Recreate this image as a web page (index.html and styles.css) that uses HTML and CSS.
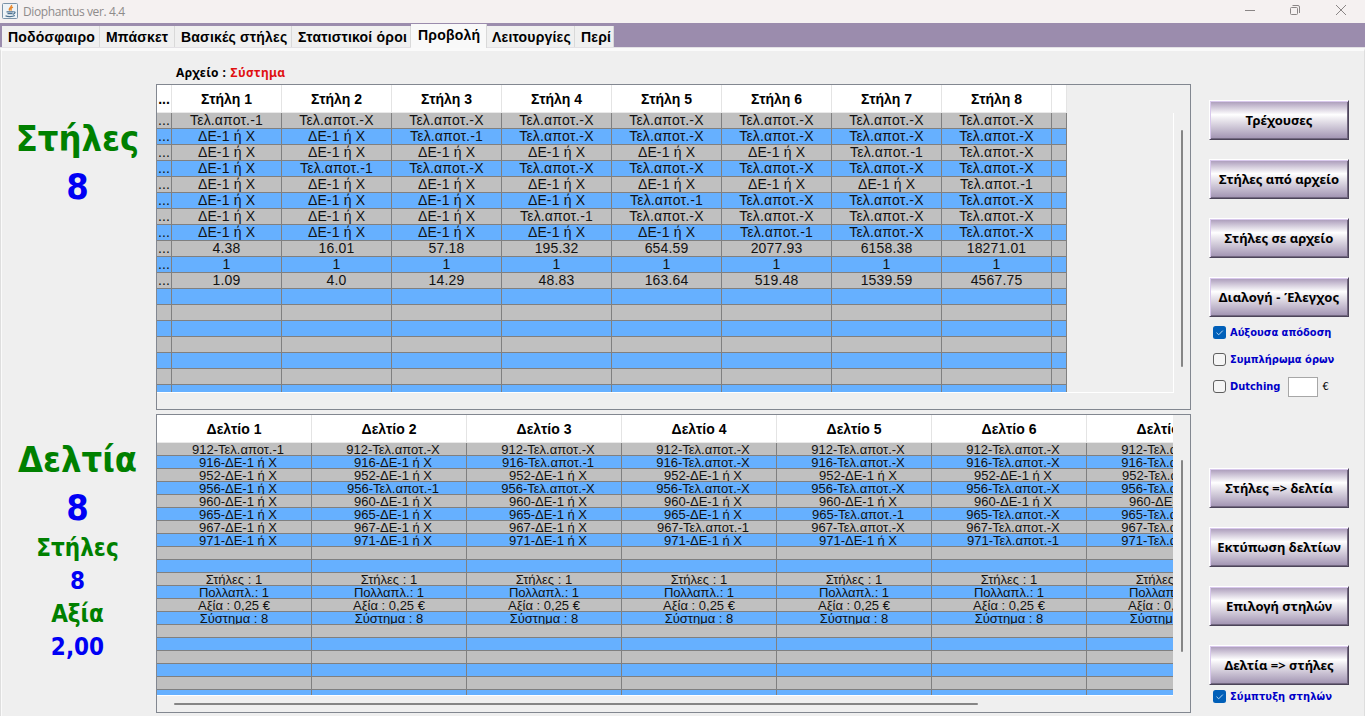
FILE: index.html
```html
<!DOCTYPE html>
<html lang="el">
<head>
<meta charset="utf-8">
<title>Diophantus ver. 4.4</title>
<link rel="stylesheet" href="styles.css">
</head>
<body>
<header class="titlebar">
  <svg class="app-icon" width="16" height="16" viewBox="0 0 16 16">
    <rect x=".5" y=".5" width="15" height="15" rx="1" fill="#eef3f7" stroke="#7b93a8"/>
    <path d="M9.500 2C10.300 4.200 6 4.700 7.600 7.700M11 4.200C8.600 5 8.600 6 9.400 7.600" fill="none" stroke="#e8862a" stroke-width="1.400"/>
    <path d="M4.500 8.800h6.500M5.500 10.700h5M11.200 8.800c2.800-.5 2.200 2.100-.4 2.500M3.500 12.800c2 1.300 7 1.200 9.300-.2" fill="none" stroke="#4d7291" stroke-width="1.200"/>
  </svg>
  <span class="app-title">Diophantus ver. 4.4</span>
  <svg class="win-controls" width="104" height="12" viewBox="0 0 104 12" fill="none" stroke="#8a8686">
    <path d="M1 6.500h10"/>
    <rect x="46.500" y="3.500" width="7" height="7" rx="1"/>
    <path d="M48.500 1.500h5.500q1.500 0 1.500 1.500v6"/>
    <path d="M92 1l10 10M102 1L92 11"/>
  </svg>
</header>
<nav class="tabs">
  <span class="tab t1">Ποδόσφαιρο</span><span class="tab t2">Μπάσκετ</span><span class="tab t3">Βασικές στήλες</span><span class="tab t4">Στατιστικοί όροι</span><span class="tab t5 active">Προβολή</span><span class="tab t6">Λειτουργίες</span><span class="tab t7">Περί</span>
</nav>
<main class="page">
  <aside class="totals">
    <div class="big green s1">Στήλες</div>
    <div class="big blue s2">8</div>
    <div class="big green s3">Δελτία</div>
    <div class="big blue s4">8</div>
    <div class="mid green s5">Στήλες</div>
    <div class="mid blue s6">8</div>
    <div class="mid green s7">Αξία</div>
    <div class="mid blue s8">2,00</div>
  </aside>
  <section class="center">
    <div class="file-line"><span>Αρχείο :</span> <span class="file-name">Σύστημα</span></div>
    <div class="panel panel-columns">
      <div class="viewport">
        <div class="grid grid-columns" id="columns"></div>
      </div>
      <div class="vbar"><div class="vthumb"></div></div>
    </div>
    <div class="panel panel-slips">
      <div class="viewport">
        <div class="grid grid-slips" id="slips"></div>
      </div>
      <div class="vbar"><div class="vthumb"></div></div>
      <div class="hthumb"></div>
    </div>
  </section>
  <aside class="actions">
    <div class="buttons upper">
      <button class="btn"><span class="b1">Τρέχουσες</span></button>
      <button class="btn"><span class="b2">Στήλες από αρχείο</span></button>
      <button class="btn"><span class="b3">Στήλες σε αρχείο</span></button>
      <button class="btn"><span class="b4">Διαλογή - Έλεγχος</span></button>
    </div>
    <div class="checks">
      <div class="check"><svg class="box" width="13" height="13" viewBox="0 0 13 13"><rect width="13" height="13" rx="2.500" fill="#005fb8"/><path d="M3.500 6.700l2.200 2.100L9.800 4.600" fill="none" stroke="#b9d8f2"/></svg><span class="label c1">Αύξουσα απόδοση</span></div>
      <div class="check"><span class="box empty"></span><span class="label c2">Συμπλήρωμα όρων</span></div>
      <div class="check"><span class="box empty"></span><span class="label c3">Dutching</span><span class="amount"></span><span class="euro">€</span></div>
    </div>
    <div class="buttons lower">
      <button class="btn"><span class="b5">Στήλες =&gt; δελτία</span></button>
      <button class="btn"><span class="b6">Εκτύπωση δελτίων</span></button>
      <button class="btn"><span class="b7">Επιλογή στηλών</span></button>
      <button class="btn"><span class="b8">Δελτία =&gt; στήλες</span></button>
    </div>
    <div class="check last"><svg class="box" width="13" height="13" viewBox="0 0 13 13"><rect width="13" height="13" rx="2.500" fill="#005fb8"/><path d="M3.500 6.700l2.200 2.100L9.800 4.600" fill="none" stroke="#b9d8f2"/></svg><span class="label c4">Σύμπτυξη στηλών</span></div>
  </aside>
</main>
<script src="app.js"></script>
</body>
</html>
```
FILE: styles.css
```css
* { box-sizing: border-box; }
body { margin: 0; width: 1365px; height: 716px; overflow: hidden; background: #efefef; font-family: "Liberation Sans", Arial, sans-serif; color: #000; }

.titlebar { height: 23px; background: #f5f1f1; display: flex; align-items: center; padding-left: 2px; }
.app-icon { margin-top: -1px; }
.app-title { margin-left: 5px; font: 12px/20px "Open Sans", sans-serif; color: #8e8b8b; letter-spacing: -0.38px; }
.win-controls { margin-left: auto; margin-right: 17px; margin-top: -3px; }

.tabs { height: 25px; background: #9b8cad; display: flex; align-items: flex-end; padding-left: 2px; border-bottom: 1px solid #e3e1e5; }
.tab { height: 21px; padding-left: 6px; background: #f0f0f0; border-right: 1px solid #d9d9d9; font-weight: bold; font-size: 14px; line-height: 22px; letter-spacing: 0.2px; white-space: nowrap; }
.tab.active { height: 24px; margin-bottom: -1px; padding-left: 7px; background: #f9f9f9; line-height: 23px; }
.t1 { width: 98px; } .t2 { width: 75px; } .t3 { width: 117px; } .t4 { width: 119px; } .t5 { width: 76px; } .t6 { width: 88px; padding-left: 5px; } .t7 { width: 39px; }

.page { height: 668px; display: flex; border-top: 3px solid #fafafa; border-left: 1px solid #dedede; border-right: 1px solid #dedede; box-shadow: inset 1px 0 #fafafa; }

.totals { width: 155px; padding-top: 64px; text-align: center; font-family: "DejaVu Sans Condensed", "DejaVu Sans", sans-serif; font-stretch: condensed; font-weight: bold; white-space: nowrap; }
.totals div { padding-right: 2px; }
.green { color: #008000; } .blue { color: #0000f4; }
.big { font-size: 36px; height: 48px; line-height: 48px; }
.mid { font-size: 24px; height: 33px; line-height: 33px; }
.s3 { margin-top: 225px; }

.center { width: 1035px; }
.file-line { height: 33px; padding: 14px 0 0 20px; font: bold 12px/16px "Noto Sans", sans-serif; letter-spacing: 0.35px; white-space: pre; }
.file-name { color: #e01010; margin-left: 1px; }
.panel { display: grid; grid-template-columns: 1017px 16px; border: 1px solid #828790; }
.panel-columns { height: 326px; grid-template-rows: 308px; }
.panel-slips { height: 299px; margin-top: 4px; grid-template-rows: 281px 16px; }
.viewport { overflow: hidden; border-bottom: 1px solid #fff; }
.panel-columns .viewport { background: linear-gradient(#fff, #fff) right 0 top 28px / 1px 300px no-repeat; }
.panel-slips .viewport { margin-right: 1px; }
.grid { display: grid; }
.grid-columns { width: 910px; grid-template-columns: 15px repeat(8, 110px) 15px; grid-template-rows: 28px; grid-auto-rows: 16px; }
.grid-slips { width: 1085px; grid-template-columns: repeat(7, 155px); grid-template-rows: 28px; grid-auto-rows: 13px; }
.head { background: #fff; border-right: 1px solid #e4e4e4; border-bottom: 1px solid #e9e9e9; font-weight: bold; font-size: 14px; line-height: 28px; text-align: center; white-space: nowrap; overflow: hidden; }
.cell { border-right: 1px solid #808080; border-bottom: 1px solid #808080; text-align: center; white-space: nowrap; overflow: hidden; color: #111; }
.gray { background: #c0c0c0; } .azure { background: #66b0ff; }
.grid-columns .cell { font-size: 14px; line-height: 15px; letter-spacing: 0.15px; }
.grid-slips .cell { font-size: 13px; line-height: 13px; }
.grid-slips .match { padding-left: 8px; }
.vbar { padding-left: 7px; }
.vthumb { width: 2px; border-radius: 1px; background: #858585; }
.panel-columns .vthumb { margin-top: 45px; height: 237px; }
.panel-slips .vthumb { margin-top: 45px; height: 192px; }
.hthumb { width: 804px; height: 2px; margin: 7px 0 0 17px; background: #858585; border-radius: 1px; }

.actions { padding: 49px 0 0 18px; }
.buttons { display: flex; flex-direction: column; gap: 19px; }
.btn { width: 140px; height: 40px; padding: 0; border: 1px solid; border-color: #fff #4c4459 #4c4459 #fff; box-shadow: inset 1px 1px #d8c8ec, inset -1px -1px #71677f; background: linear-gradient(#a898b8, #fff 36%, #ece9ef 48%, #a092b1); font: bold 13px/36px "Noto Sans", sans-serif; color: #000; white-space: nowrap; }
.b4 { letter-spacing: 0.15px; }
.checks { height: 151px; padding-top: 9px; display: flex; flex-direction: column; gap: 14px; }
.check { height: 13px; display: flex; align-items: center; margin-left: 4px; font: bold 11px/13px "DejaVu Sans Condensed", "DejaVu Sans", sans-serif; font-stretch: condensed; color: #0000c8; white-space: nowrap; }
.label { padding-bottom: 1px; }
.c4 { letter-spacing: 0.1px; }
.box { flex: none; width: 13px; height: 13px; margin-right: 4px; }
.empty { border: 1px solid #5f5f5f; border-radius: 3px; background: #f5f5f5; }
.amount { width: 30px; height: 20px; margin: 1px 4px 0 8px; background: #fff; border: 1px solid #a7a7a7; }
.euro { color: #000; font-weight: normal; }
.last { margin-top: 5px; }
```
FILE: app.js
```js
function fill(id, heads, rows) {
  const grid = document.getElementById(id);
  const add = (cls, text) => {
    const el = document.createElement('div');
    el.className = cls;
    const span = document.createElement('span');
    span.textContent = text;
    el.appendChild(span);
    grid.appendChild(el);
  };
  heads.forEach(h => add('head', h));
  rows.forEach((row, i) => heads.forEach((_, c) =>
    add('cell ' + (i % 2 ? 'azure' : 'gray') + (i < 8 ? ' match' : ''), row[c] || '')));
}

const D = 'ΔΕ-1 ή Χ', X = 'Τελ.αποτ.-Χ', ONE = 'Τελ.αποτ.-1';
// Column at which each match switches from double chance to its final result.
const pivots = [0, 2, 6, 1, 7, 4, 3, 5];
const pick = (p, c) => (c < p ? D : c === p ? ONE : X);
const range = n => Array.from({ length: n }, (_, i) => i);

const columnRows = pivots.map(p => ['...', ...range(8).map(c => pick(p, c)), '']);
columnRows.push(
  ['...', '4.38', '16.01', '57.18', '195.32', '654.59', '2077.93', '6158.38', '18271.01'],
  ['...', ...range(8).map(() => '1')],
  ['...', '1.09', '4.0', '14.29', '48.83', '163.64', '519.48', '1539.59', '4567.75'],
  ...range(7).map(() => [])
);
fill('columns', ['...', ...range(8).map(i => 'Στήλη ' + (i + 1)), ''], columnRows);

const codes = [912, 916, 952, 956, 960, 965, 967, 971];
const slipRows = codes.map((code, r) => range(7).map(c => code + '-' + pick(pivots[r], c)));
slipRows.push([], [],
  ...['Στήλες : 1', 'Πολλαπλ.: 1', 'Αξία : 0,25 €', 'Σύστημα : 8'].map(t => range(7).map(() => t)),
  ...range(6).map(() => [])
);
fill('slips', range(7).map(i => 'Δελτίο ' + (i + 1)), slipRows);
```
